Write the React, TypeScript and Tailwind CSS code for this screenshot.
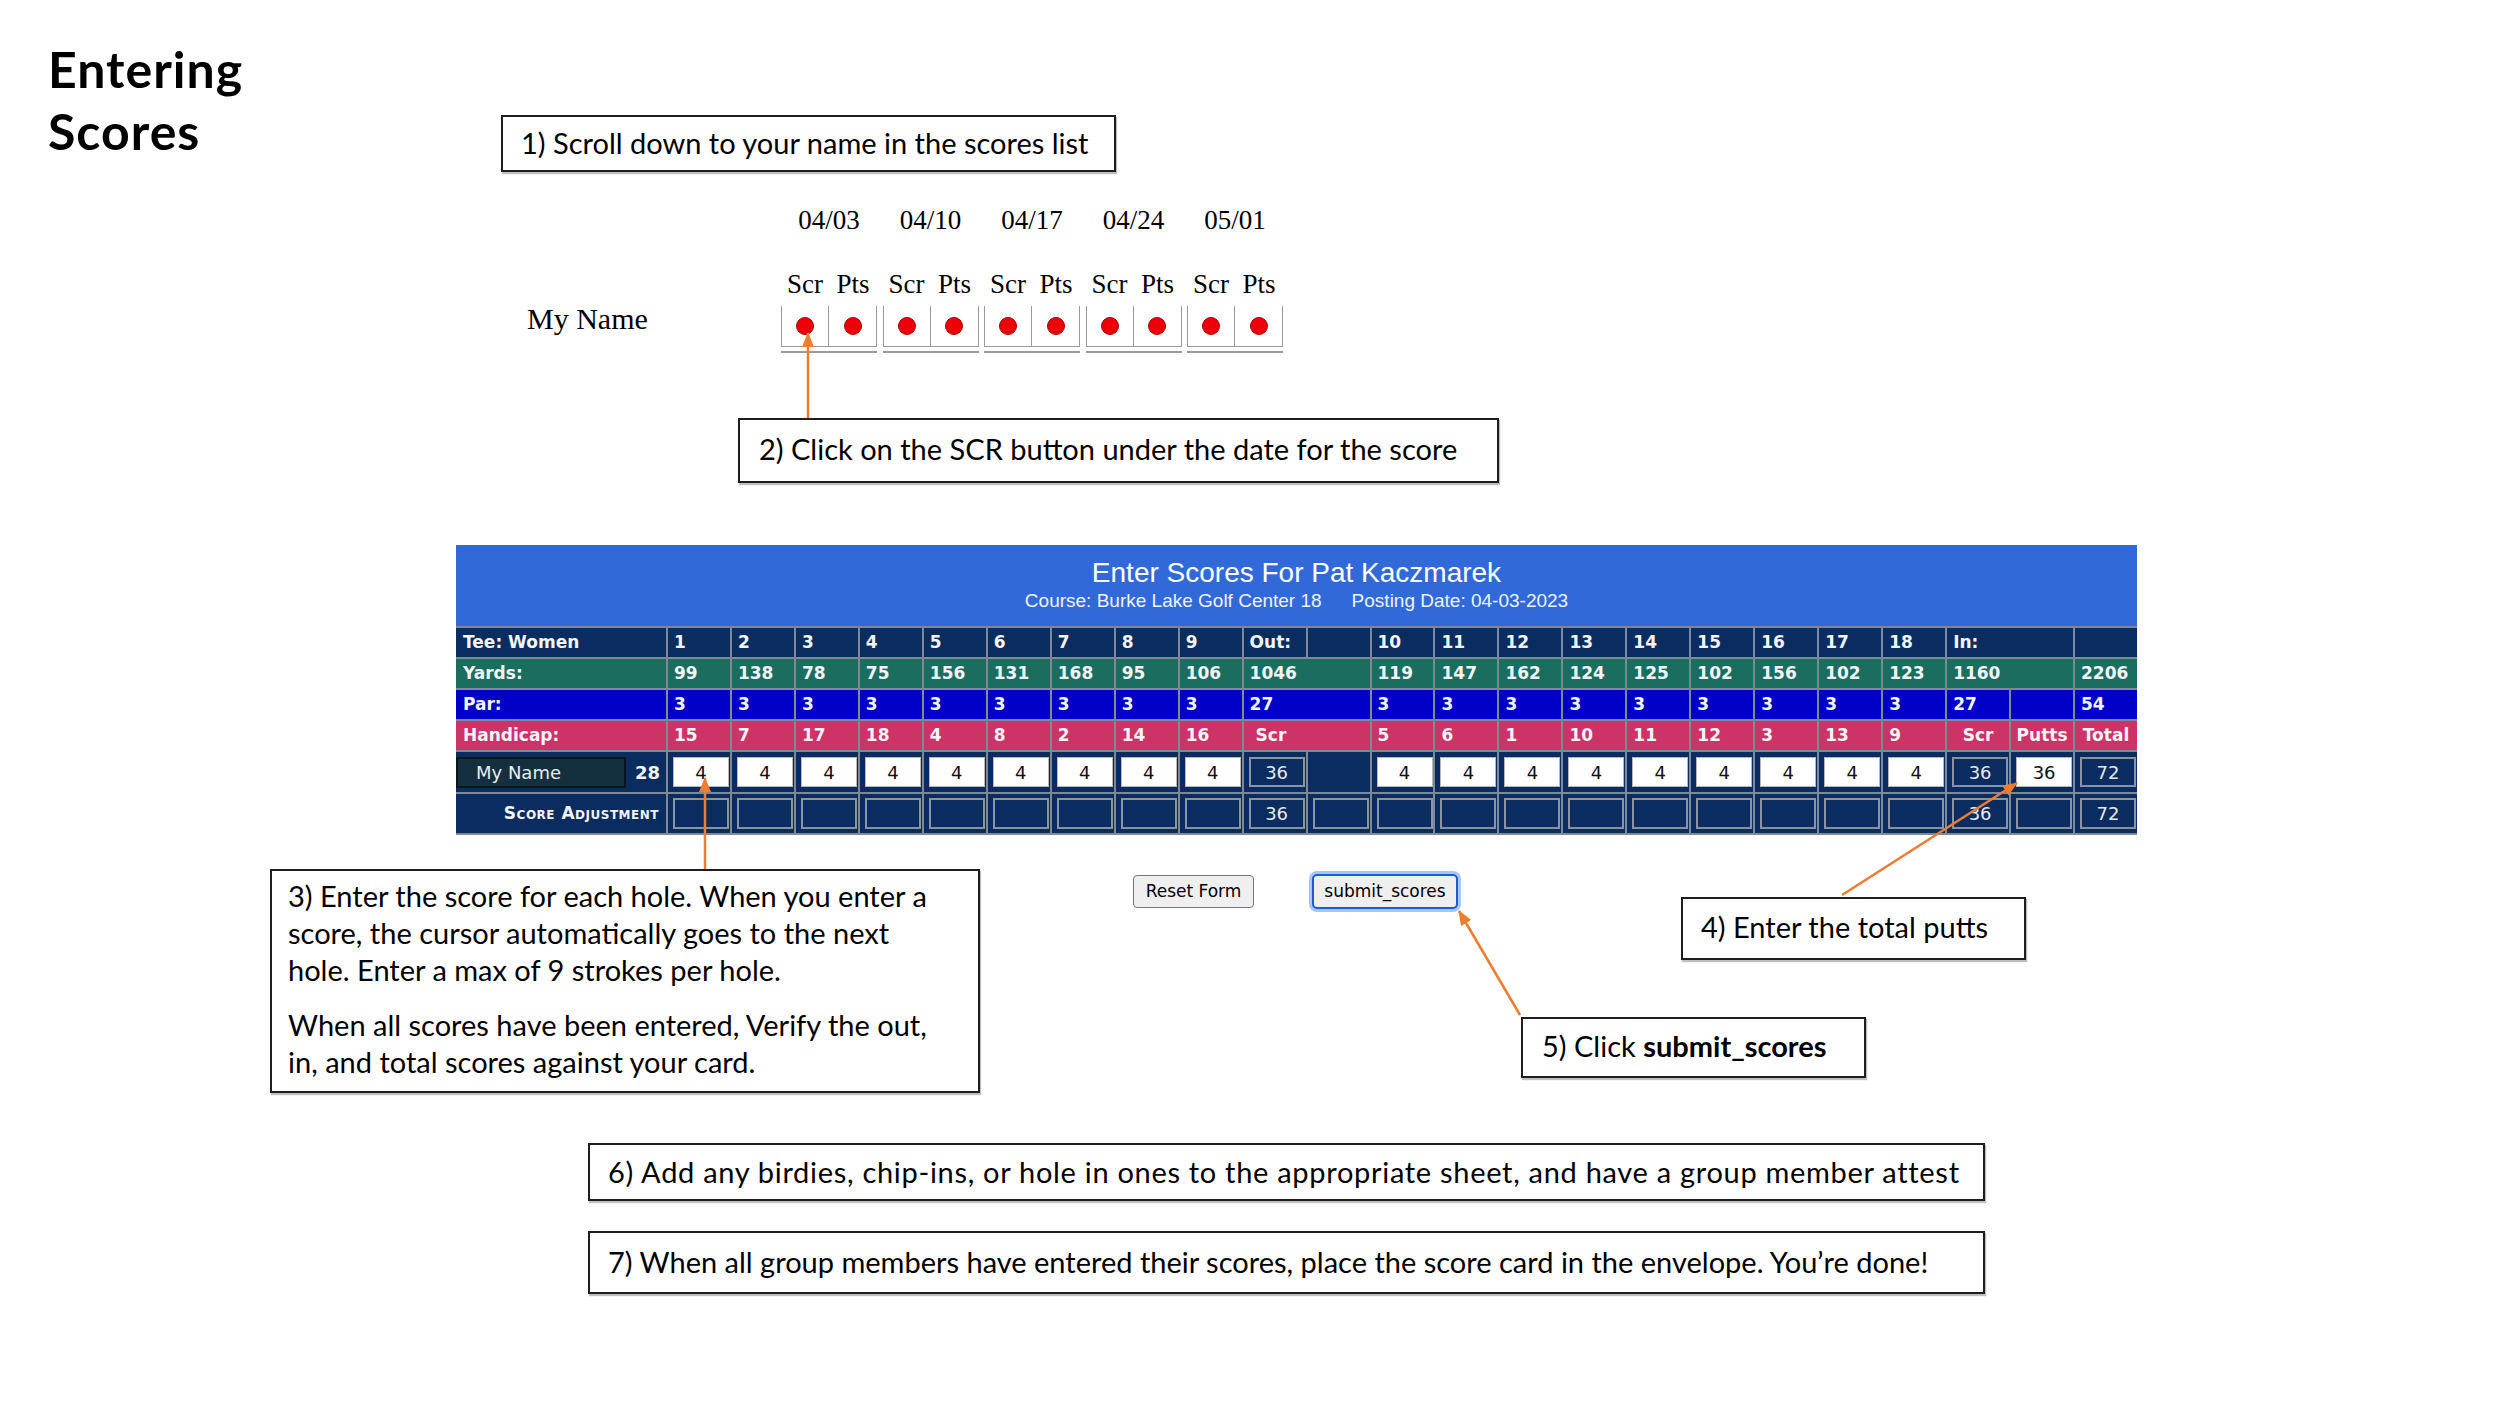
import React from 'react';

type Cell = { t?: string; span?: boolean; c?: string };

const nums = (a: number, b: number) => Array.from({ length: b - a + 1 }, (_, i) => ({ t: String(a + i) }));
const list = (xs: (string | number)[]) => xs.map((t) => ({ t: String(t) }));

const teeRow: Cell[] = [{ t: 'Tee: Women' }, ...nums(1, 9), { t: 'Out:' }, {}, ...nums(10, 18), { t: 'In:', span: true }, {}];
const yardsRow: Cell[] = [
  { t: 'Yards:' },
  ...list([99, 138, 78, 75, 156, 131, 168, 95, 106]),
  { t: '1046', span: true },
  ...list([119, 147, 162, 124, 125, 102, 156, 102, 123]),
  { t: '1160', span: true },
  { t: '2206' },
];
const parRow: Cell[] = [
  { t: 'Par:' },
  ...list([3, 3, 3, 3, 3, 3, 3, 3, 3]),
  { t: '27', span: true },
  ...list([3, 3, 3, 3, 3, 3, 3, 3, 3]),
  { t: '27' },
  {},
  { t: '54' },
];
const hcpRow: Cell[] = [
  { t: 'Handicap:' },
  ...list([15, 7, 17, 18, 4, 8, 2, 14, 16]),
  { t: 'Scr', span: true, c: 'pl-[12px]' },
  ...list([5, 6, 1, 10, 11, 12, 3, 13, 9]),
  { t: 'Scr', c: 'justify-center !pl-0' },
  { t: 'Putts', c: 'justify-center !pl-0' },
  { t: 'Total', c: 'justify-center !pl-0' },
];

const InfoRow = ({ cells, bg }: { cells: Cell[]; bg: string }) => (
  <>
    {cells.map((cell, i) => (
      <div key={i} className={`${bg} ${cell.span ? 'col-span-2' : ''} flex items-center pl-[6px] ${i === 0 ? 'pl-[7px]' : ''} ${cell.c ?? ''}`}>
        {cell.t}
      </div>
    ))}
  </>
);

const WhiteBox = ({ v }: { v: string }) => (
  <div className="ml-[5px] w-[56px] h-[30px] bg-white border border-[#b8b8b8] flex items-center justify-center text-[18px] font-normal text-[#111]">{v}</div>
);

const DarkBox = ({ v = '', h = 'h-[30px]' }: { v?: string; h?: string }) => (
  <div className={`ml-[5px] w-[56px] ${h} border-2 border-[#8a949f] flex items-center justify-center text-[18px] font-normal text-[#e3e9f0]`}>{v}</div>
);

const NavyCell = ({ children }: { children?: React.ReactNode }) => <div className="bg-[#0b2c5e] flex items-center">{children}</div>;

const ScoreCard = () => (
  <div className="absolute left-[456px] top-[545px] w-[1681px] font-['DejaVu_Sans',Verdana,sans-serif] text-[#f2f4f8]">
    <div className="h-[81px] bg-[#316ad8] flex flex-col items-center pt-[12px] font-['Liberation_Sans',Arial,sans-serif] text-white">
      <div className="text-[28px] leading-[32px]">Enter Scores For Pat Kaczmarek</div>
      <div className="mt-[1px] text-[19px] leading-[22px] text-[#eef3fc]">
        Course: Burke Lake Golf Center 18<span className="ml-[30px]">Posting Date: 04-03-2023</span>
      </div>
    </div>
    <div className="grid grid-cols-[210px_repeat(23,minmax(0,1fr))] grid-rows-[29px_29px_29px_29px_40px_39px] gap-[2px] py-[2px] bg-[#7f8994] text-[17px] font-bold">
      <InfoRow cells={teeRow} bg="bg-[#0b2c5e]" />
      <InfoRow cells={yardsRow} bg="bg-[#1b6e5f]" />
      <InfoRow cells={parRow} bg="bg-[#0000c8]" />
      <InfoRow cells={hcpRow} bg="bg-[#cc3366]" />

      <div className="bg-[#0b2c5e] flex items-center justify-between pr-[6px]">
        <div className="w-[170px] h-[31px] bg-[#14303f] border-2 border-[#08161f] flex items-center pl-[18px] text-[18px] font-normal text-[#e6edf2]">My Name</div>
        <span className="text-[18px]">28</span>
      </div>
      {Array.from({ length: 9 }, (_, i) => (
        <NavyCell key={`a${i}`}><WhiteBox v="4" /></NavyCell>
      ))}
      <NavyCell><DarkBox v="36" /></NavyCell>
      <NavyCell />
      {Array.from({ length: 9 }, (_, i) => (
        <NavyCell key={`b${i}`}><WhiteBox v="4" /></NavyCell>
      ))}
      <NavyCell><DarkBox v="36" /></NavyCell>
      <NavyCell><WhiteBox v="36" /></NavyCell>
      <NavyCell><DarkBox v="72" /></NavyCell>

      <div className="bg-[#0b2c5e] flex items-center justify-end pr-[7px] text-[17px] tracking-[0.5px] [font-variant:small-caps]">Score Adjustment</div>
      {Array.from({ length: 23 }, (_, i) => (
        <NavyCell key={`c${i}`}>
          <DarkBox h="h-[31px]" v={i === 9 || i === 20 ? '36' : i === 22 ? '72' : ''} />
        </NavyCell>
      ))}
    </div>
  </div>
);

const dates = ['04/03', '04/10', '04/17', '04/24', '05/01'];

const Dot = () => <span className="w-[18px] h-[18px] rounded-full bg-[#ee0008] border border-[#a80008]" />;

const ScoreList = () => (
  <div className="absolute left-[527px] top-[205px] font-['Liberation_Serif','Times_New_Roman',serif] text-black">
    <div className="flex pl-[254px] gap-[5.5px] text-[27px] leading-[30px]">
      {dates.map((d) => (
        <div key={d} className="w-[96px] text-center">{d}</div>
      ))}
    </div>
    <div className="flex pl-[254px] gap-[5.5px] mt-[34px] text-[27px] leading-[30px]">
      {dates.map((d) => (
        <div key={d} className="w-[96px] flex">
          <span className="w-[48px] text-center">Scr</span>
          <span className="w-[48px] text-center">Pts</span>
        </div>
      ))}
    </div>
    <div className="flex mt-[7px]">
      <div className="w-[254px] text-[30px] leading-[30px] -mt-[2px]">My Name</div>
      <div className="flex gap-[5.5px]">
        {dates.map((d) => (
          <div key={d} className="w-[96px]">
            <div className="flex h-[41px] border-x border-b border-[#9a9a9a]">
              <div className="w-1/2 flex items-center justify-center border-r border-[#9a9a9a]"><Dot /></div>
              <div className="w-1/2 flex items-center justify-center"><Dot /></div>
            </div>
            <div className="mt-[4px] h-[2px] bg-[#9a9a9a]" />
          </div>
        ))}
      </div>
    </div>
  </div>
);

const Note = ({ className = '', children }: { className?: string; children: React.ReactNode }) => (
  <div className={`absolute bg-white border-2 border-[#1e1e1e] shadow-[1px_2px_1px_rgba(0,0,0,0.25)] text-[29px] leading-[37px] text-black ${className}`}>{children}</div>
);

const Arrows = () => (
  <svg className="absolute left-0 top-0 pointer-events-none" width="2500" height="1406" viewBox="0 0 2500 1406">
    <defs>
      <marker id="head" markerUnits="userSpaceOnUse" markerWidth="15" markerHeight="12" refX="14" refY="6" orient="auto">
        <path d="M0,0 L15,6 L0,12 z" fill="#ed7d31" />
      </marker>
    </defs>
    <g stroke="#ed7d31" strokeWidth="2.5" markerEnd="url(#head)">
      <line x1="808" y1="418" x2="808" y2="333" />
      <line x1="705" y1="869" x2="705" y2="778" />
      <line x1="1842" y1="895" x2="2017" y2="783" />
      <line x1="1520" y1="1015" x2="1459" y2="911" />
    </g>
  </svg>
);

export default function App() {
  return (
    <div className="relative w-[2500px] h-[1406px] overflow-hidden bg-white font-['Lato','Open_Sans',sans-serif] text-black">
      <h1 className="absolute left-[48px] top-[38px] text-[50px] leading-[62px] tracking-[1px] font-bold">
        Entering
        <br />
        Scores
      </h1>

      <Note className="left-[501px] top-[115px] w-[615px] h-[57px] flex items-center pl-[18px] pb-[2px]">1) Scroll down to your name in the scores list</Note>

      <ScoreList />

      <Note className="left-[738px] top-[418px] w-[761px] h-[65px] flex items-center pl-[19px] pb-[4px]">2) Click on the SCR button under the date for the score</Note>

      <ScoreCard />

      <Note className="left-[270px] top-[869px] w-[710px] h-[224px] pl-[16px] pt-[6px]">
        <p>
          3) Enter the score for each hole. When you enter a<br />
          score, the cursor automatically goes to the next<br />
          hole. Enter a max of 9 strokes per hole.
        </p>
        <p className="mt-[18px]">
          When all scores have been entered, Verify the out,<br />
          in, and total scores against your card.
        </p>
      </Note>

      <div className="absolute left-[1133px] top-[874px] flex items-center gap-[58px] font-['DejaVu_Sans',Tahoma,sans-serif] text-[17px] text-black">
        <button className="w-[121px] h-[33px] rounded-[4px] border border-[#767676] bg-[#efefef]">Reset Form</button>
        <button className="w-[146px] h-[35px] rounded-[5px] border-2 border-[#1a5fd0] bg-[#efefef] shadow-[0_0_0_3px_#a9c5f2]">submit_scores</button>
      </div>

      <Note className="left-[1681px] top-[897px] w-[345px] h-[63px] flex items-center pl-[18px] pb-[4px]">4) Enter the total putts</Note>

      <Note className="left-[1521px] top-[1017px] w-[345px] h-[61px] flex items-center pl-[19px] pb-[4px]">
        5) Click&nbsp;<b>submit_scores</b>
      </Note>

      <Note className="left-[588px] top-[1143px] w-[1397px] h-[58px] flex items-center pl-[18px] pb-[2px] tracking-[0.7px]">
        6) Add any birdies, chip-ins, or hole in ones to the appropriate sheet, and have a group member attest
      </Note>

      <Note className="left-[588px] top-[1231px] w-[1397px] h-[63px] flex items-center pl-[18px] pb-[2px]">
        7) When all group members have entered their scores, place the score card in the envelope. You’re done!
      </Note>

      <Arrows />
    </div>
  );
}
